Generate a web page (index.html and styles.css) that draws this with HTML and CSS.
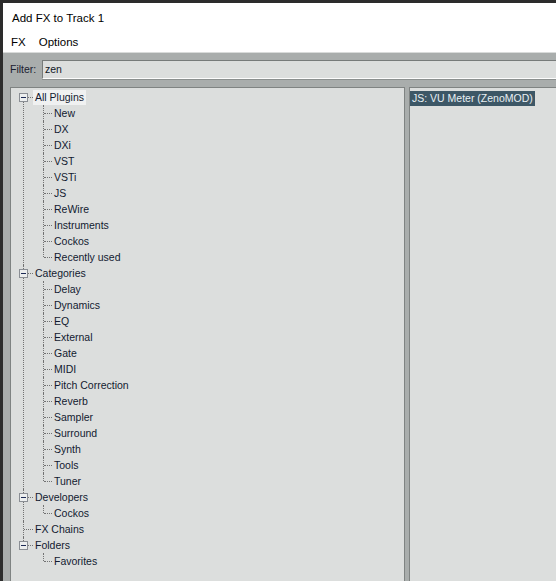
FILE: index.html
```html
<!DOCTYPE html>
<html>
<head>
<meta charset="utf-8">
<link rel="stylesheet" href="styles.css">
</head>
<body>
<div class="window">
  <div class="titlebar">Add FX to Track 1</div>
  <div class="menubar"><span class="menu">FX</span><span class="menu">Options</span></div>
  <div class="filter-row">
    <span class="filter-label">Filter:</span>
    <div class="filter-input">zen</div>
  </div>
  <div class="panes">
    <div class="pane tree-pane">
      <ul class="tree">
        <li class="first"><span class="exp"></span><div class="row"><span class="label focus">All Plugins</span></div>
          <ul>
            <li><div class="row"><span class="label">New</span></div></li>
            <li><div class="row"><span class="label">DX</span></div></li>
            <li><div class="row"><span class="label">DXi</span></div></li>
            <li><div class="row"><span class="label">VST</span></div></li>
            <li><div class="row"><span class="label">VSTi</span></div></li>
            <li><div class="row"><span class="label">JS</span></div></li>
            <li><div class="row"><span class="label">ReWire</span></div></li>
            <li><div class="row"><span class="label">Instruments</span></div></li>
            <li><div class="row"><span class="label">Cockos</span></div></li>
            <li><div class="row"><span class="label">Recently used</span></div></li>
          </ul>
        </li>
        <li><span class="exp"></span><div class="row"><span class="label">Categories</span></div>
          <ul>
            <li><div class="row"><span class="label">Delay</span></div></li>
            <li><div class="row"><span class="label">Dynamics</span></div></li>
            <li><div class="row"><span class="label">EQ</span></div></li>
            <li><div class="row"><span class="label">External</span></div></li>
            <li><div class="row"><span class="label">Gate</span></div></li>
            <li><div class="row"><span class="label">MIDI</span></div></li>
            <li><div class="row"><span class="label">Pitch Correction</span></div></li>
            <li><div class="row"><span class="label">Reverb</span></div></li>
            <li><div class="row"><span class="label">Sampler</span></div></li>
            <li><div class="row"><span class="label">Surround</span></div></li>
            <li><div class="row"><span class="label">Synth</span></div></li>
            <li><div class="row"><span class="label">Tools</span></div></li>
            <li><div class="row"><span class="label">Tuner</span></div></li>
          </ul>
        </li>
        <li><span class="exp"></span><div class="row"><span class="label">Developers</span></div>
          <ul>
            <li><div class="row"><span class="label">Cockos</span></div></li>
          </ul>
        </li>
        <li><div class="row"><span class="label">FX Chains</span></div></li>
        <li><span class="exp"></span><div class="row"><span class="label">Folders</span></div>
          <ul>
            <li><div class="row"><span class="label">Favorites</span></div></li>
          </ul>
        </li>
      </ul>
    </div>
    <div class="pane list-pane">
      <div class="item selected">JS: VU Meter (ZenoMOD)</div>
    </div>
  </div>
</div>
</body>
</html>
```
FILE: styles.css
```css
html, body {
  margin: 0;
  padding: 0;
  height: 100%;
  overflow: hidden;
}
body {
  background: #2c2c2c;
  font-family: "Liberation Sans", Arial, sans-serif;
  color: #121a30;
}
.window {
  margin: 3px 0 0 3px;
  height: 578px;
  background: #a9adac;
  display: flex;
  flex-direction: column;
  overflow: hidden;
}
.titlebar {
  height: 30px;
  line-height: 30px;
  background: #fff;
  padding-left: 9px;
  font-size: 11.5px;
  color: #000;
}
.menubar {
  height: 19px;
  line-height: 19px;
  background: #fff;
  padding-left: 8px;
  display: flex;
  font-size: 11.5px;
  color: #000;
}
.menu {
  margin-right: 13px;
}
.filter-row {
  border-top: 1px solid #d9dbda;
  padding: 7px 0 0 7px;
  height: 20px;
  margin-bottom: 7px;
  display: flex;
  align-items: flex-start;
}
.filter-label {
  width: 32px;
  font-size: 10.5px;
  line-height: 19px;
  color: #1a2030;
}
.filter-input {
  flex: 1;
  height: 17px;
  line-height: 17px;
  background: #dcdedd;
  border-top: 1px solid #777b7a;
  border-left: 1px solid #777b7a;
  border-bottom: 1px solid #fdfdfd;
  box-shadow: 0 1px 0 #8c908f;
  padding-left: 2px;
  font-size: 10.5px;
  color: #101828;
}
.panes {
  flex: 1;
  display: flex;
  padding-left: 7px;
  gap: 4px;
  min-height: 0;
}
.pane {
  background: #dcdedd;
  border: 1px solid #7f8382;
  border-bottom: none;
}
.tree-pane {
  width: 393px;
  flex: none;
}
.list-pane {
  flex: 1;
  border-right: none;
}
.tree, .tree ul {
  list-style: none;
  margin: 0;
  padding: 0;
}
.tree {
  padding-top: 1px;
}
.tree li {
  position: relative;
}
.tree > li {
  padding-left: 22px;
}
.tree > li::before {
  content: "";
  position: absolute;
  left: 12px;
  top: 0;
  bottom: 0;
  border-left: 1px dotted #727272;
}
.tree > li.first::before {
  top: 8px;
}
.tree > li:last-child::before {
  bottom: auto;
  height: 8px;
}
.tree > li::after {
  content: "";
  position: absolute;
  left: 13px;
  top: 8px;
  width: 9px;
  border-top: 1px dotted #727272;
}
.tree ul li {
  padding-left: 19px;
}
.tree ul li::before {
  content: "";
  position: absolute;
  left: 10px;
  top: 0;
  bottom: 0;
  border-left: 1px dotted #727272;
}
.tree ul li:last-child::before {
  bottom: auto;
  height: 8px;
}
.tree ul li::after {
  content: "";
  position: absolute;
  left: 11px;
  top: 8px;
  width: 8px;
  border-top: 1px dotted #727272;
}
.exp {
  position: absolute;
  left: 8px;
  top: 4px;
  width: 9px;
  height: 9px;
  box-sizing: border-box;
  border: 1px solid #8a8e94;
  background: #eceeee;
  z-index: 2;
}
.exp::after {
  content: "";
  position: absolute;
  left: 1px;
  top: 3px;
  width: 5px;
  height: 1px;
  background: #1c2a55;
}
.row {
  height: 16px;
  line-height: 16px;
  font-size: 10.5px;
  white-space: nowrap;
}
.label {
  display: inline-block;
  padding: 0 2px;
  height: 15px;
  line-height: 15px;
}
.label.focus {
  background: #f0f1f1;
}
.item {
  font-size: 10.5px;
  height: 15px;
  line-height: 15px;
  margin-top: 1px;
  padding: 0 2px;
  display: inline-block;
  white-space: nowrap;
}
.item.selected {
  background: #3d5766;
  color: #e8eff3;
}
```
